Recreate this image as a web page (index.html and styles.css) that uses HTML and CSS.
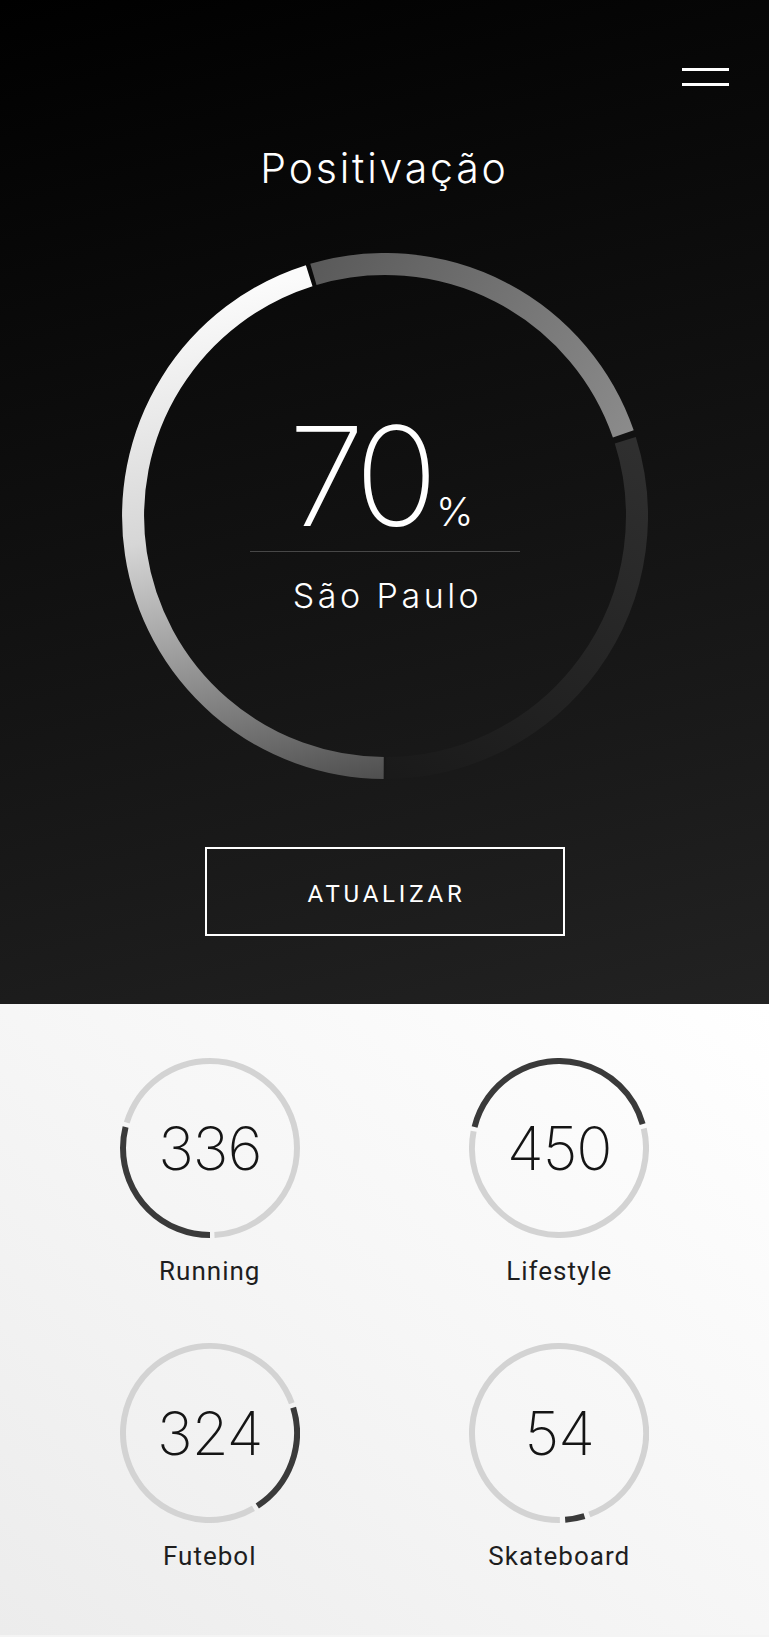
FILE: index.html
```html
<!DOCTYPE html>
<html lang="pt-BR">
  <head>
    <meta charset="UTF-8" />
    <meta name="viewport" content="width=device-width, initial-scale=1" />
    <title>Positivação</title>
    <link rel="stylesheet" href="styles.css">
  </head>
  <body>
    <section class="hero">
      <div class="topbar">
        <button class="menu-btn" aria-label="Menu">
          <span></span>
          <span></span>
        </button>
      </div>

      <h1 class="hero-title">Positivação</h1>

      <div class="gauge">
        <svg class="gauge-ring" viewBox="0 0 526 526" width="526" height="526">
          <defs>
            <linearGradient id="grad-light" gradientUnits="userSpaceOnUse" x1="200" y1="20" x2="300" y2="520">
              <stop offset="0" stop-color="#fbfbfb" />
              <stop offset="0.45" stop-color="#d6d6d6" />
              <stop offset="1" stop-color="#4e4e4e" />
            </linearGradient>
            <linearGradient id="grad-mid" gradientUnits="userSpaceOnUse" x1="190" y1="20" x2="510" y2="190">
              <stop offset="0" stop-color="#5a5a5a" />
              <stop offset="1" stop-color="#8c8c8c" />
            </linearGradient>
            <linearGradient id="grad-dark" gradientUnits="userSpaceOnUse" x1="505" y1="190" x2="263" y2="515">
              <stop offset="0" stop-color="#2f2f2f" />
              <stop offset="1" stop-color="#1a1a1a" />
            </linearGradient>
          </defs>
          <path d="M261.7 515 A252 252 0 0 1 187.2 22.7" stroke="url(#grad-light)" />
          <path d="M191.4 21.4 A252 252 0 0 1 501.3 180.9" stroke="url(#grad-mid)" />
          <path d="M503.3 187.2 A252 252 0 0 1 264.3 515" stroke="url(#grad-dark)" />
        </svg>
        <div class="gauge-content">
          <div class="gauge-value">70<span class="gauge-unit">%</span></div>
          <div class="gauge-divider"></div>
          <div class="gauge-label">São Paulo</div>
        </div>
      </div>

      <button class="update-btn">ATUALIZAR</button>
    </section>

    <section class="stats">
      <div class="stat">
        <div class="ring">
          <svg viewBox="0 0 180 180" width="180" height="180">
            <g transform="rotate(90 90 90)">
              <circle class="ring-dark" cx="90" cy="90" r="87" pathLength="360" stroke-dasharray="104 360" />
              <circle class="ring-light" cx="90" cy="90" r="87" pathLength="360" stroke-dasharray="250 360" stroke-dashoffset="-107" />
            </g>
          </svg>
          <span class="ring-value">336</span>
        </div>
        <div class="stat-label">Running</div>
      </div>

      <div class="stat">
        <div class="ring">
          <svg viewBox="0 0 180 180" width="180" height="180">
            <g transform="rotate(194 90 90)">
              <circle class="ring-dark" cx="90" cy="90" r="87" pathLength="360" stroke-dasharray="150 360" />
              <circle class="ring-light" cx="90" cy="90" r="87" pathLength="360" stroke-dasharray="204 360" stroke-dashoffset="-153" />
            </g>
          </svg>
          <span class="ring-value">450</span>
        </div>
        <div class="stat-label">Lifestyle</div>
      </div>

      <div class="stat">
        <div class="ring">
          <svg viewBox="0 0 180 180" width="180" height="180">
            <g transform="rotate(-17 90 90)">
              <circle class="ring-dark" cx="90" cy="90" r="87" pathLength="360" stroke-dasharray="74 360" />
              <circle class="ring-light" cx="90" cy="90" r="87" pathLength="360" stroke-dasharray="280 360" stroke-dashoffset="-77" />
            </g>
          </svg>
          <span class="ring-value">324</span>
        </div>
        <div class="stat-label">Futebol</div>
      </div>

      <div class="stat">
        <div class="ring">
          <svg viewBox="0 0 180 180" width="180" height="180">
            <g transform="rotate(73 90 90)">
              <circle class="ring-dark" cx="90" cy="90" r="87" pathLength="360" stroke-dasharray="13 360" />
              <circle class="ring-light" cx="90" cy="90" r="87" pathLength="360" stroke-dasharray="340 360" stroke-dashoffset="-16.5" />
            </g>
          </svg>
          <span class="ring-value">54</span>
        </div>
        <div class="stat-label">Skateboard</div>
      </div>
    </section>
  </body>
</html>
```

FILE: styles.css
```css
body {
  margin: 0;
  font-family: "Inter", "Roboto", sans-serif;
  background-color: #f4f4f4;
}

.hero {
  background: linear-gradient(165deg, #000000 0%, #0c0c0c 35%, #1b1b1b 80%, #222222 100%);
  color: #ffffff;
  padding: 68px 0 68px;
  display: flex;
  flex-direction: column;
  align-items: center;
}

.topbar {
  align-self: stretch;
  display: flex;
  justify-content: flex-end;
  padding-right: 40px;
}

.menu-btn {
  display: flex;
  flex-direction: column;
  gap: 12px;
  width: 47px;
  padding: 0;
  border: none;
  background: transparent;
  cursor: pointer;
}

.menu-btn span {
  display: block;
  height: 3px;
  background-color: #ffffff;
}

.hero-title {
  margin: 57px 0 0;
  font-size: 41px;
  line-height: 50px;
  font-weight: 300;
  letter-spacing: 2.8px;
}

.gauge {
  position: relative;
  width: 526px;
  height: 526px;
  margin-top: 60px;
}

.gauge-ring {
  position: absolute;
  top: 0;
  left: 0;
}

.gauge-ring path {
  fill: none;
  stroke-width: 22;
}

.gauge-content {
  position: relative;
  display: flex;
  flex-direction: column;
  align-items: center;
  padding-top: 173px;
}

.gauge-value {
  font-size: 138px;
  line-height: 100px;
  font-weight: 200;
  letter-spacing: -8px;
  margin-left: -7px;
}

.gauge-unit {
  font-size: 40px;
  line-height: 0;
  font-weight: 300;
  letter-spacing: 0;
  margin-left: 6px;
}

.gauge-divider {
  width: 270px;
  height: 1px;
  margin-top: 25px;
  background-color: #474747;
}

.gauge-label {
  margin-top: 27px;
  padding-left: 6px;
  font-size: 34px;
  line-height: 34px;
  font-weight: 300;
  letter-spacing: 3.5px;
}

.update-btn {
  margin-top: 68px;
  width: 360px;
  height: 89px;
  padding: 5px 0 0 4px;
  border: 2px solid #ffffff;
  background: transparent;
  color: #ffffff;
  font-family: "Roboto", sans-serif;
  font-size: 24px;
  letter-spacing: 3.8px;
  cursor: pointer;
}

.stats {
  display: grid;
  grid-template-columns: 1fr 1fr;
  row-gap: 57px;
  padding: 54px 35px 64px;
  background: linear-gradient(to bottom left, #ffffff 0%, #f6f6f6 50%, #ececec 100%);
}

.stat {
  display: flex;
  flex-direction: column;
  align-items: center;
}

.ring {
  position: relative;
  width: 180px;
  height: 180px;
  display: flex;
  align-items: center;
  justify-content: center;
}

.ring svg {
  position: absolute;
  top: 0;
  left: 0;
}

.ring circle {
  fill: none;
  stroke-width: 6;
}

.ring-dark {
  stroke: #3a3a3a;
}

.ring-light {
  stroke: #d3d3d3;
}

.ring-value {
  position: relative;
  font-size: 60px;
  font-weight: 200;
  letter-spacing: -1px;
  color: #151515;
}

.stat-label {
  margin-top: 18px;
  font-family: "Roboto", sans-serif;
  font-size: 26px;
  line-height: 30px;
  letter-spacing: 1px;
  color: #1e1e1e;
}
```
